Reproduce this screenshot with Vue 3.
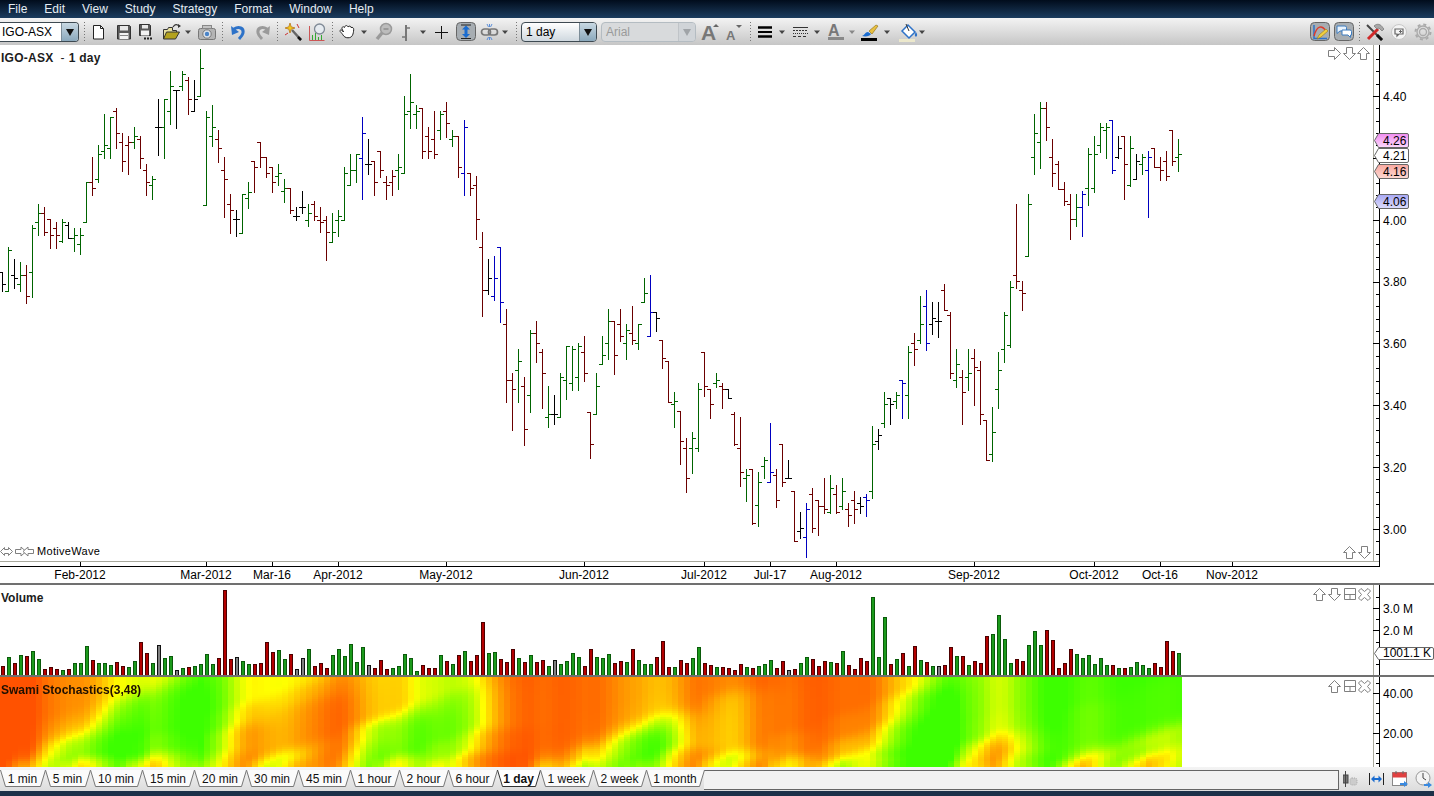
<script setup>
import { onMounted, ref } from 'vue'

const menus = ['File', 'Edit', 'View', 'Study', 'Strategy', 'Format', 'Window', 'Help']

const bars = [
[272,291,272,284,'k'],[247,291,291,250,'g'],[259,288,275,278,'k'],[262,291,284,275,'g'],[265,303,275,296,'r'],[225,297,272,228,'g'],[204,235,222,213,'g'],[207,235,213,232,'r'],
[219,248,219,235,'r'],[222,248,228,235,'r'],[219,242,241,222,'g'],[222,238,225,238,'k'],[228,251,238,235,'g'],[228,254,244,235,'g'],[182,222,222,182,'g'],[157,195,182,188,'r'],
[145,182,179,154,'g'],[114,158,151,145,'g'],[117,158,148,117,'g'],[108,148,111,133,'r'],[133,171,142,161,'r'],[136,174,145,142,'r'],[127,148,142,136,'g'],[136,168,139,158,'r'],
[164,195,170,182,'r'],[176,199,185,179,'g'],[99,155,127,127,'k'],[99,158,127,99,'g'],[71,124,111,86,'g'],[90,128,90,90,'k'],[71,90,86,74,'g'],[77,114,80,99,'r'],
[80,111,111,99,'k'],[49,96,96,68,'g'],[111,205,205,117,'g'],[105,146,136,127,'g'],[130,162,139,148,'r'],[157,217,170,179,'r'],[194,233,204,210,'r'],[210,236,219,219,'k'],
[194,233,233,194,'g'],[182,208,198,192,'g'],[161,192,161,167,'r'],[142,167,142,157,'r'],[157,177,157,173,'r'],[167,192,167,182,'r'],[164,185,176,173,'g'],[179,202,191,188,'g'],
[188,213,188,210,'r'],[207,220,216,216,'k'],[191,213,207,207,'k'],[204,226,220,213,'g'],[201,220,204,216,'r'],[207,232,220,222,'r'],[216,260,220,232,'r'],[213,242,242,232,'g'],
[210,236,220,216,'g'],[167,220,220,173,'g'],[154,185,185,170,'g'],[154,182,170,154,'g'],[117,199,158,133,'b'],[139,174,164,164,'k'],[161,195,161,182,'r'],[151,177,151,170,'r'],
[176,199,182,185,'r'],[170,195,182,176,'r'],[154,189,170,167,'g'],
[96,173,173,114,'g'],[74,128,111,102,'g'],[105,128,114,111,'g'],[108,158,108,151,'r'],[127,158,136,151,'r'],[111,158,139,154,'r'],[111,139,130,114,'g'],[102,137,111,123,'r'],
[130,146,139,136,'g'],[136,177,136,167,'r'],[120,195,173,127,'b'],[173,195,173,188,'r'],[176,239,185,219,'r'],[232,316,247,290,'r'],[259,294,290,278,'k'],[256,300,296,278,'b'],
[247,322,247,302,'b'],[309,402,324,380,'r'],[373,430,380,389,'r'],[349,402,370,361,'g'],[377,445,386,429,'r'],[330,412,395,333,'g'],[321,362,333,343,'r'],[349,408,352,373,'r'],
[386,427,417,414,'g'],[395,424,414,414,'k'],[373,417,417,377,'g'],[346,399,380,346,'g'],[346,390,383,349,'g'],[343,390,377,346,'g'],[336,381,352,373,'r'],[412,458,412,444,'r'],
[373,414,414,386,'g'],[336,364,364,355,'g'],[309,359,343,321,'g'],[321,374,321,355,'r'],[309,341,324,336,'r'],[324,359,343,330,'g'],[306,344,333,340,'r'],[324,349,343,324,'g'],
[278,302,302,293,'g'],[275,336,336,312,'b'],[312,331,312,318,'k'],[340,368,340,358,'r'],[361,402,361,402,'r'],[392,427,404,401,'g'],[411,464,411,441,'r'],[438,492,448,478,'r'],
[432,473,448,438,'g'],[383,451,448,389,'g'],[352,396,352,386,'r'],[389,418,389,404,'r'],[373,387,383,380,'g'],[383,408,386,389,'r'],[389,398,389,398,'k'],[412,445,414,444,'r'],
[417,486,448,472,'r'],[469,501,478,475,'g'],[469,524,469,523,'r'],[472,526,505,482,'g'],[457,478,466,460,'g'],[423,482,482,472,'b'],[469,507,475,500,'r'],[444,486,444,482,'r'],
[460,478,478,478,'k'],
[491,541,491,541,'r'],[512,538,531,528,'k'],[503,557,537,509,'b'],[488,532,494,528,'r'],[500,535,500,506,'r'],[478,513,506,509,'r'],[475,513,512,488,'g'],[485,513,494,512,'r'],
[478,509,506,491,'g'],[503,526,509,515,'r'],[491,523,500,509,'r'],[497,513,503,506,'k'],[494,516,497,500,'b'],[426,498,491,444,'g'],[429,449,441,435,'k'],[392,427,423,404,'g'],
[398,424,398,404,'k'],[392,408,401,395,'g'],[380,418,380,383,'b'],[346,418,395,352,'g'],[333,365,343,349,'r'],[296,343,340,324,'g'],[290,350,306,343,'b'],[302,334,324,318,'k'],
[302,337,321,321,'k'],[284,310,290,310,'r'],[312,378,315,373,'r'],[349,387,380,364,'g'],[370,424,377,392,'r'],[349,390,377,373,'g'],[349,405,358,367,'r'],[361,424,370,414,'r'],
[420,460,420,460,'r'],[407,461,454,432,'g'],[352,408,389,370,'g'],[312,362,349,315,'g'],[281,347,345,287,'g'],[204,288,275,281,'r'],[281,310,290,293,'r'],[194,256,256,204,'g'],
[114,174,157,133,'g'],[102,168,142,108,'g'],[102,140,108,127,'r'],[139,186,157,173,'r'],[161,189,164,189,'r'],[182,205,189,201,'r'],[194,239,204,219,'r'],[194,226,219,207,'g'],
[191,236,207,194,'b'],[148,205,188,154,'g'],[136,192,188,154,'g'],[123,152,145,127,'g'],[123,158,130,127,'g'],[120,173,120,170,'b'],[136,158,157,148,'k'],[136,199,136,164,'r'],
[136,186,185,148,'g'],[154,179,179,161,'k'],[154,174,164,157,'g'],[151,217,170,157,'b'],[148,167,148,167,'r'],[157,180,167,170,'r'],[151,180,161,176,'r'],[130,165,130,161,'r'],
[139,171,157,154,'g']
]

const vols = [9,18,12,20,19,24,16,6,8,6,5,6,12,12,29,15,12,12,10,13,9,8,14,33,22,12,30,17,19,5,7,8,9,11,21,11,17,85,
16,18,14,11,11,12,33,23,25,16,21,6,17,26,9,12,7,20,26,19,31,13,28,10,7,15,6,7,9,21,17,4,10,7,7,20,14,11,20,24,14,20,53,22,23,16,13,26,17,13,20,13,15,9,15,11,14,22,18,9,26,18,17,21,12,14,13,26,15,11,11,18,34,8,8,15,12,17,28,12,10,8,8,7,5,11,8,7,9,11,15,7,14,5,6,12,18,16,9,14,13,12,24,10,6,17,14,78,18,58,11,16,22,9,29,15,13,9,9,10,28,19,19,10,14,12,39,41,60,36,12,16,14,30,44,30,45,35,7,12,26,21,17,20,11,17,10,10,7,7,8,13,10,7,12,8,34,24,22]

const colors = { g: '#006400', r: '#6b0000', b: '#0000c0', k: '#000000' }

const seriesPaths = Object.keys(colors).map((key) => {
  let d = ''
  bars.forEach((b, i) => {
    if (b[4] !== key) return
    const x = 2 + 6 * i
    d += `M${x + 0.5} ${b[0]}V${b[1] + 1}M${x - 3} ${b[2] + 0.5}H${x + 0.5}M${x + 0.5} ${b[3] + 0.5}H${x + 4}`
  })
  return { key, d, color: colors[key] }
})

const volBars = vols.map((h, i) => {
  const b = bars[i]
  const kind = b[3] < b[2] ? 'up' : b[3] > b[2] ? 'down' : 'flat'
  return { x: 6 * i + 1.5, y: 675.5 - h, h, kind }
})

const priceTicks = []
for (let k = -3; k < 38; k++) priceTicks.push({ y: Math.round(96 + k * 12.37), major: ((k % 5) + 5) % 5 === 0 })
const priceLabels = [['4.40', 96], ['4.00', 220], ['3.80', 281], ['3.60', 343], ['3.40', 405], ['3.20', 467], ['3.00', 529]]
const dateLabels = [['Feb-2012', 80], ['Mar-2012', 206], ['Mar-16', 272], ['Apr-2012', 338], ['May-2012', 446], ['Jun-2012', 584], ['Jul-2012', 704], ['Jul-17', 770], ['Aug-2012', 836], ['Sep-2012', 974], ['Oct-2012', 1094], ['Oct-16', 1160], ['Nov-2012', 1232]]
const priceTags = [['4.26', 140, 'url(#tagPink)'], ['4.21', 155, '#ffffff'], ['4.16', 171, 'url(#tagRed)'], ['4.06', 201, 'url(#tagBlue)']]
const tagPath = (y, h, r) => `M1374.5 ${y + 0.5}L1378.5 ${y - h + 0.5}H${r - 1.5}Q${r} ${y - h + 0.5} ${r} ${y - h + 2}V${y + h - 1}Q${r} ${y + h + 0.5} ${r - 1.5} ${y + h + 0.5}H1378.5Z`

const ctlPaths = {
  up: 'M6.5 .5L12.5 6.5H9.5V12.5H3.5V6.5H.5Z',
  down: 'M3.5 .5H9.5V6.5H12.5L6.5 12.5L.5 6.5H3.5Z',
  right: 'M.5 3.5H6.5V.5L12.5 6.5L6.5 12.5V9.5H.5Z',
  left: 'M12.5 3.5H6.5V.5L.5 6.5L6.5 12.5V9.5H12.5Z',
  win: 'M.5 .5H11.5V11.5H.5ZM.5 6.5H11.5M6 6.5V11.5',
  x: 'M3 .5L6.5 3.5L10 .5L12.5 3L9.5 6.5L12.5 10L10 12.5L6.5 9.5L3 12.5L.5 10L3.5 6.5L.5 3Z',
  both: 'M.5 6.5L4.5 2.5V4.5H8.5V2.5L12.5 6.5L8.5 10.5V8.5H4.5V10.5Z',
  fwd: 'M.5 4.5H6V2L11 6.5L6 11V8.5H.5Z',
  back: 'M12.5 4.5H7V2L2 6.5L7 11V8.5H12.5Z'
}
const priceCtl = [['right', 1328, 47], ['down', 1343, 47], ['up', 1357, 47], ['up', 1343, 546], ['down', 1358, 546], ['both', 0, 545], ['fwd', 15, 545], ['back', 21, 545]]
const volCtl = [['up', 1313, 588], ['down', 1328, 588], ['win', 1344, 588], ['x', 1358, 588]]
const heatCtl = [['up', 1328, 680], ['win', 1344, 680], ['x', 1358, 680]]

const volTicks = [597, 608, 619, 630, 642, 653, 664, 675]
const heatTicks = [683, 693, 703, 713, 723, 733, 743, 753, 763]

const svg = (inner, w = 22) => `<svg xmlns="http://www.w3.org/2000/svg" width="${w}" height="22" viewBox="0 0 ${w} 22">${inner}</svg>`
const caret = (c = '#444') => svg(`<path d="M1 9.5h6l-3 3.5z" fill="${c}"/>`, 8)
const sep = svg('<path d="M1.5 1v20" stroke="#777" stroke-dasharray="1 2"/>', 3)
const txt = (x, y, size, fill, t) => `<text x="${x}" y="${y}" font-family="Liberation Sans" font-weight="bold" font-size="${size}" fill="${fill}">${t}</text>`

const I = {
  doc: svg('<path d="M5.5 4.5h7l3 3v10.500h-10z" fill="#fff" stroke="#222"/><path d="M12.500 4.500v3h3" fill="none" stroke="#222"/>'),
  save: svg('<path d="M4.500 4.500h12l1 1v12.500h-13z" fill="#5a5a5a" stroke="#333"/><rect x="7" y="5" width="8" height="4.500" fill="#e8e8e8"/><rect x="6.500" y="12" width="9" height="6" fill="#f4f4f4"/><rect x="7" y="14" width="8" height="1" fill="#888"/>'),
  saveas: svg('<path d="M4.500 3.500h10l1 1v10h-11z" fill="#5a5a5a" stroke="#333"/><rect x="7" y="4" width="6" height="3.500" fill="#e8e8e8"/><rect x="6" y="9.500" width="8" height="5" fill="#f4f4f4"/><path d="M9 17.500h2M12 17.500h2M15 17.500h2" stroke="#222" stroke-width="2"/>'),
  open: svg('<path d="M3.500 18V8.500h4l1-2h4v3h4v3" fill="#e6e0a0" stroke="#333"/><path d="M3.500 18l3-7h13l-4 7z" fill="#b3a21e" stroke="#333"/><path d="M13 6c2-3 4-3 6-1" fill="none" stroke="#333" stroke-width="1.200"/><path d="M18 3l3 2-3 2z" fill="#333"/>'),
  camera: svg('<rect x="2.500" y="7.500" width="17" height="11" rx="2" fill="#b4b4b4" stroke="#777"/><rect x="6.500" y="4.500" width="9" height="3" fill="#c4c4c4" stroke="#888"/><circle cx="11" cy="13" r="4.200" fill="#e0e4ea" stroke="#777"/><circle cx="11" cy="13" r="2.200" fill="#4a84c8"/>'),
  undo: svg('<path d="M7 8c5-3 10-1 9 4-.4 2-2 4-4 6" fill="none" stroke="#2d72c8" stroke-width="3"/><path d="M4 5l1 9 7-3z" fill="#2d72c8"/>'),
  redo: svg('<path d="M15 8c-5-3-10-1-9 4 .4 2 2 4 4 6" fill="none" stroke="#9a9a9a" stroke-width="3"/><path d="M18 5l-1 9-7-3z" fill="#9a9a9a"/>'),
  wand: svg('<path d="M19 19L10 9" stroke="#666" stroke-width="2.500"/><path d="M19 19l-3-3" stroke="#111" stroke-width="2.500"/><path d="M8 2l1.200 3.800L13 7 9.200 8.200 8 12 6.800 8.200 3 7l3.800-1.200z" fill="#f2c81e" stroke="#b06a10" stroke-width=".7"/><path d="M15 3l2 4M3 14l3-2" stroke="#c33"/>'),
  mag: svg('<path d="M3.500 5v14.500h15" fill="none" stroke="#c55"/><path d="M6.500 19v-5M9.500 19v-7M12.500 19v-3M15.500 19v-5" stroke="#3a3"/><circle cx="13.500" cy="8" r="5" fill="#e6ecf2" fill-opacity=".85" stroke="#7f8a96" stroke-width="1.300"/>'),
  hand: svg('<path d="M5 8c-.5-2 1.500-3 2.500-1.500C8 4 10.500 4 11 6c1-1.500 3-1 3 .5 1.500-.5 3 .5 2.700 2.300-.4 4-1 8-5.700 8-2.500 0-4-1-5.500-3.500C4 11 2 10 3.300 9.200 4 8.800 5 9 6.500 11z" fill="#fff" stroke="#222"/>'),
  zoom: svg('<circle cx="13" cy="8" r="5.500" fill="#bcbcbc" stroke="#9a9a9a" stroke-width="1.500"/><path d="M9 12l-5 6" stroke="#9a9a9a" stroke-width="3.500"/><path d="M10.500 8h5" stroke="#777"/>'),
  marker: svg('<path d="M11 4v16" stroke="#777" stroke-width="2"/><path d="M7 16h4M11 7h4" stroke="#777" stroke-width="1.500"/>'),
  plus: svg('<path d="M11.500 5v13M5 11.500h13" stroke="#111"/>'),
  toggle: svg('<rect x="1.500" y="1.500" width="19" height="18" rx="4" fill="#a7adb2" stroke="#666"/><path d="M11 4.500l4 4h-2.500v4.500h2.500l-4 4-4-4h2.500V8.500H7z" fill="#1a6cd0"/><path d="M6 4h10M6 17.500h10" stroke="#222"/>'),
  link: svg('<rect x="2.500" y="8" width="9" height="6" rx="3" fill="none" stroke="#777" stroke-width="1.700"/><rect x="9.500" y="8" width="9" height="6" rx="3" fill="none" stroke="#777" stroke-width="1.700"/><path d="M8 3l1.500 3M13 3l-1.500 3M8 19l1.500-3M13 19l-1.500-3M10.500 3v3M10.500 16v3" stroke="#5b8ed8"/>'),
  fontUp: svg(txt(1, 19, 21, '#777', 'A') + '<path d="M13 6l3-3 3 3z" fill="#666"/>'),
  fontDown: svg(txt(4, 19, 13, '#777', 'A') + '<path d="M14 4h6l-3 3z" fill="#666"/>'),
  weight: svg('<path d="M3 6.500h14" stroke="#000" stroke-width="2.500"/><path d="M3 11h14" stroke="#000" stroke-width="2"/><path d="M3 15.500h14" stroke="#000" stroke-width="2.500"/>'),
  dash: svg('<path d="M3 6.500h15" stroke="#333"/><path d="M3 9.500h15" stroke="#333" stroke-dasharray="2 1"/><path d="M3 12.500h15" stroke="#333" stroke-dasharray="1 1"/><path d="M3 15.500h15" stroke="#333" stroke-dasharray="3 2"/>'),
  fontColor: svg(txt(3, 15, 16, '#777', 'A') + '<rect x="3" y="16" width="16" height="3" fill="#888"/>'),
  pen: svg('<path d="M3 15c3-1 3-4 6-4l3 2c-1 2-5 3-9 2z" fill="#1a6cd0"/><path d="M10 10l7-6 2 1-6 8z" fill="#e8c040" stroke="#8a6a10" stroke-width=".6"/><rect x="2" y="17" width="16" height="3" fill="#000"/>'),
  fill: svg('<path d="M5 10l6-6 7 7-6 6z" fill="#fff" stroke="#2d72c8" stroke-width="1.500"/><path d="M9 3l3 7" stroke="#333"/><path d="M19 11c1 2 2 3 0 5-2-2-1-3 0-5z" fill="#2d72c8"/><rect x="2" y="18" width="16" height="3" fill="#ece8cc"/>'),
  study: svg('<rect x="1.500" y="1.500" width="19" height="18" rx="4" fill="#a7adb2" stroke="#666"/><path d="M5 4v13.500h13" fill="none" stroke="#2d72c8" stroke-width="1.500"/><path d="M5 15C8 4 13 4 17 10" fill="none" stroke="#e0392a" stroke-width="1.500"/><path d="M8 18l2-4 7-6 2 2-7 6z" fill="#f0d040" stroke="#a07a10" stroke-width=".6"/>'),
  talk: svg('<rect x="1.500" y="1.500" width="19" height="18" rx="4" fill="#a7adb2" stroke="#666"/><path d="M4 5h8a1.500 1.500 0 0 1 1.500 1.500V10H7l-3 2.500V5z" fill="#e8f2fc" stroke="#3d7cc0"/><path d="M9 9h8a1.500 1.500 0 0 1 1.500 1.500V14h-1v2.500L15 14H9z" fill="#fff" stroke="#3d7cc0"/>'),
  tools: svg('<path d="M3 4l15 15" stroke="#444" stroke-width="2"/><path d="M13 14l5 5" stroke="#111" stroke-width="3"/><path d="M4 18L14 8" stroke="#d02828" stroke-width="3"/><path d="M10 5c3-3 7-2 9 2l1 1-2 2-3-3-2 1z" fill="#a8a8a8" stroke="#666" stroke-width=".6"/>'),
  circle: svg('<circle cx="11" cy="11" r="7.500" fill="#f4f4f4" stroke="#c8c8c8"/><path d="M7 8h8v5H11l-2 2v-2H7z" fill="none" stroke="#666" stroke-width="1.200"/><path d="M12.500 9v3M11 10.500h3" stroke="#666"/>'),
  gear: svg('<circle cx="11" cy="11" r="3.500" fill="none" stroke="#aaa" stroke-width="1.300"/><circle cx="11" cy="11" r="6" fill="none" stroke="#aaa" stroke-width="1.300"/><circle cx="11" cy="11" r="7.500" fill="none" stroke="#aaa" stroke-width="2" stroke-dasharray="3 2.900"/>')
}

const items = [
  { kind: 'combo', x: 0, w: 79, text: 'IGO-ASX', cls: 'sym' },
  { c: 84, w: 3, html: sep }, { c: 99, w: 22, html: I.doc }, { c: 124, w: 22, html: I.save }, { c: 146, w: 22, html: I.saveas }, { c: 171, w: 22, html: I.open }, { c: 188, w: 8, html: caret() }, { c: 207, w: 22, html: I.camera },
  { c: 222, w: 3, html: sep }, { c: 238, w: 22, html: I.undo }, { c: 263, w: 22, html: I.redo }, { c: 277, w: 3, html: sep }, { c: 293, w: 22, html: I.wand }, { c: 317, w: 22, html: I.mag }, { c: 332, w: 3, html: sep },
  { c: 348, w: 22, html: I.hand }, { c: 364, w: 8, html: caret() }, { c: 384, w: 22, html: I.zoom }, { c: 406, w: 22, html: I.marker }, { c: 423, w: 8, html: caret() }, { c: 441, w: 22, html: I.plus }, { c: 466, w: 22, html: I.toggle },
  { c: 490, w: 22, html: I.link }, { c: 505, w: 8, html: caret() }, { c: 516, w: 3, html: sep },
  { kind: 'combo', x: 521, w: 76, text: '1 day', cls: 'per' },
  { kind: 'combo', x: 601, w: 95, text: 'Arial', cls: 'off' },
  { c: 711, w: 22, html: I.fontUp }, { c: 733, w: 22, html: I.fontDown }, { c: 750, w: 3, html: sep }, { c: 766, w: 22, html: I.weight }, { c: 782, w: 8, html: caret() }, { c: 801, w: 22, html: I.dash }, { c: 817, w: 8, html: caret() },
  { c: 836, w: 22, html: I.fontColor }, { c: 852, w: 8, html: caret('#888') }, { c: 870, w: 22, html: I.pen }, { c: 887, w: 8, html: caret() }, { c: 908, w: 22, html: I.fill }, { c: 922, w: 8, html: caret() },
  { c: 1320, w: 22, html: I.study }, { c: 1344, w: 22, html: I.talk }, { c: 1359, w: 3, html: sep }, { c: 1375, w: 22, html: I.tools }, { c: 1399, w: 22, html: I.circle }, { c: 1423, w: 22, html: I.gear }
]
let end = 0
items.forEach((it) => {
  const left = it.kind === 'combo' ? it.x : it.c - it.w / 2
  it.ml = left - end
  end = left + it.w
})

const tabDefs = [['1 min', 45], ['5 min', 45], ['10 min', 52], ['15 min', 52], ['20 min', 52], ['30 min', 52], ['45 min', 52], ['1 hour', 49], ['2 hour', 49], ['6 hour', 49], ['1 day', 43, true], ['1 week', 53], ['2 week', 53], ['1 month', 58]]
const tabs = tabDefs.map(([label, w, on]) => ({ label, w, on: !!on, edge: `0.5,0 5.5,16.5 ${w - 4.5},16.5 ${w + 0.5},0` }))

const heat = ref(null)
onMounted(() => {
  const hist = 70
  const closes = []
  for (let k = hist; k >= 1; k--) closes.push(285 - 225 * Math.min(1, k / 22) + Math.sin(k / 2.3) * 6)
  bars.forEach((b) => closes.push((b[0] + b[1]) / 2))
  const rows = 45
  const alpha = 0.34
  const field = []
  for (let row = 0; row < rows; row++) {
    const N = 48 - row
    let s1 = 0.5
    let s2 = 0.5
    const line = new Array(bars.length).fill(0.5)
    for (let t = N; t < closes.length; t++) {
      let lo = -Infinity
      let hi = Infinity
      for (let j = t - N + 1; j <= t; j++) {
        lo = Math.max(lo, closes[j])
        hi = Math.min(hi, closes[j])
      }
      const raw = lo === hi ? 0.5 : (lo - closes[t]) / (lo - hi)
      s1 = alpha * raw + (1 - alpha) * s1
      s2 = alpha * s1 + (1 - alpha) * s2
      if (t >= hist) line[t - hist] = s2
    }
    field.push(line)
  }
  const ctx = heat.value.getContext('2d')
  for (let row = 0; row < rows; row++) {
    for (let i = 0; i < bars.length; i++) {
      let sum = 0
      let n = 0
      for (let dr = -2; dr <= 2; dr++) {
        const line = field[row + dr]
        if (line) {
          sum += line[i]
          n++
        }
      }
      const m = sum / n
      const raised = m < 0.5 ? 0.5 - (0.5 - m) * 0.72 : 0.5 + (m - 0.5) * 0.95
      const v = Math.min(0.88, Math.max(0.16, raised))
      const r = v >= 0.5 ? Math.round(510 * (1 - v)) : 255
      const g = v >= 0.5 ? 255 : Math.round(510 * v)
      ctx.fillStyle = `rgb(${r},${g},0)`
      ctx.fillRect(i * 6, row * 2, 6, 2)
    }
  }
})
</script>

<template>
  <div class="app">
    <nav class="menubar">
      <span v-for="m in menus" :key="m" class="menu">{{ m }}</span>
    </nav>

    <div class="toolbar">
      <template v-for="(it, n) in items" :key="n">
        <div v-if="it.kind === 'combo'" class="combo" :class="it.cls" :style="{ marginLeft: it.ml + 'px', width: it.w + 'px' }">
          <span class="combo-text">{{ it.text }}</span>
          <span class="combo-btn"><i class="tri"></i></span>
        </div>
        <span v-else class="tool" :style="{ marginLeft: it.ml + 'px', width: it.w + 'px' }" v-html="it.html"></span>
      </template>
    </div>

    <section class="pane price">
      <svg class="plot" width="1434" height="538" viewBox="0 45 1434 538">
        <defs>
          <linearGradient id="tagPink" x1="0" y1="0" x2="0" y2="1"><stop offset="0" stop-color="#f08cf0" /><stop offset="1" stop-color="#fcd8fc" /></linearGradient>
          <linearGradient id="tagRed" x1="0" y1="0" x2="0" y2="1"><stop offset="0" stop-color="#f8a8a0" /><stop offset="1" stop-color="#fcd8d2" /></linearGradient>
          <linearGradient id="tagBlue" x1="0" y1="0" x2="0" y2="1"><stop offset="0" stop-color="#a8a8f4" /><stop offset="1" stop-color="#dcdcfc" /></linearGradient>
        </defs>
        <g class="crisp">
          <path v-for="s in seriesPaths" :key="s.key" :d="s.d" :stroke="s.color" fill="none" />
          <path d="M1373.500 45V562M0 561.500H1379.500" stroke="#a8a89c" fill="none" />
          <path d="M1379.500 45V566.500M0 566.500H1380" stroke="#000" fill="none" />
          <path v-for="t in priceTicks" :key="t.y" :d="`M${t.major ? 1373 : 1376} ${t.y + 0.5}H1379`" stroke="#000" />
          <path v-for="d in dateLabels" :key="d[0]" :d="`M${d[1] + 0.5} 562V566`" stroke="#000" />
        </g>
        <text v-for="l in priceLabels" :key="l[0]" class="axis" x="1383" :y="l[1] + 5">{{ l[0] }}</text>
        <text v-for="d in dateLabels" :key="d[0]" class="axis" :x="d[1]" y="579" text-anchor="middle">{{ d[0] }}</text>
        <g v-for="t in priceTags" :key="t[0]">
          <path :d="tagPath(t[1], 7, 1408.5)" :fill="t[2]" stroke="#666" />
          <text class="axis" x="1383" :y="t[1] + 5">{{ t[0] }}</text>
        </g>
        <g v-for="(c, n) in priceCtl" :key="n" :transform="`translate(${c[1]} ${c[2]})`">
          <path :d="ctlPaths[c[0]]" class="ctl" />
        </g>
      </svg>
      <div class="title top">IGO-ASX<span class="dash">-</span>1 day</div>
      <div class="brand">MotiveWave</div>
    </section>

    <div class="sep"></div>

    <section class="pane volume">
      <svg class="plot" width="1434" height="90" viewBox="0 585 1434 90">
        <g class="crisp">
          <rect v-for="(v, i) in volBars" :key="i" :x="v.x" :y="v.y" width="3" :height="v.h" :class="v.kind" />
          <path d="M1373.500 585V675" stroke="#a8a89c" />
          <path d="M1379.500 585V675" stroke="#000" />
          <path v-for="y in volTicks" :key="y" :d="`M${y === 608 || y === 630 ? 1373 : 1376} ${y + 0.5}H1379`" stroke="#000" />
        </g>
        <text class="axis" x="1383" y="613">3.0 M</text>
        <text class="axis" x="1383" y="635">2.0 M</text>
        <path :d="tagPath(653, 6, 1433.5)" fill="#fff" stroke="#666" />
        <text class="axis" x="1383" y="657">1001.1 K</text>
        <g v-for="(c, n) in volCtl" :key="n" :transform="`translate(${c[1]} ${c[2]})`">
          <path :d="ctlPaths[c[0]]" class="ctl" />
        </g>
      </svg>
      <div class="title vol">Volume</div>
    </section>

    <div class="sep"></div>

    <section class="pane heat">
      <canvas ref="heat" class="heatmap" width="1182" height="90"></canvas>
      <svg width="252" height="90" viewBox="1182 677 252 90">
        <g class="crisp">
          <path d="M1373.500 677V767" stroke="#a8a89c" />
          <path d="M1379.500 677V767" stroke="#000" />
          <path v-for="y in heatTicks" :key="y" :d="`M${y === 693 || y === 733 ? 1373 : 1376} ${y + 0.5}H1379`" stroke="#000" />
        </g>
        <text class="axis" x="1383" y="698">40.00</text>
        <text class="axis" x="1383" y="738">20.00</text>
        <g v-for="(c, n) in heatCtl" :key="n" :transform="`translate(${c[1]} ${c[2]})`">
          <path :d="ctlPaths[c[0]]" class="ctl" />
        </g>
      </svg>
      <div class="title swami">Swami Stochastics(3,48)</div>
    </section>

    <footer class="tabbar">
      <div class="tabs">
        <div v-for="t in tabs" :key="t.label" class="tab" :class="{ on: t.on }" :style="{ width: t.w + 'px' }">
          <svg class="tab-edge" :width="t.w + 1" height="18"><polygon :points="t.edge" :fill="t.on ? '#fff' : '#fbfbfb'" stroke="none" /><polyline :points="t.edge" fill="none" :stroke="t.on ? '#333' : '#777'" /></svg>
          <span class="tab-label">{{ t.label }}</span>
        </div>
        <div class="tab-rest"></div>
      </div>
      <div class="status">
        <svg width="18" height="18" viewBox="0 0 18 18"><rect x="0" y="5" width="5" height="8" fill="#777" stroke="#444" /><path d="M2.500 1v16" stroke="#444" /><rect x="7" y="8" width="7" height="7" rx="2" fill="#ccc" stroke="#aaa" stroke-dasharray="1 1" /></svg>
        <svg width="18" height="18" viewBox="0 0 18 18"><path d="M2.500 3v12M16.500 3v12" stroke="#222" /><path d="M4 9l3.500-3.500V8h4V5.500L15 9l-3.500 3.500V10h-4v2.500z" fill="#1a6cd0" /></svg>
        <svg width="18" height="18" viewBox="0 0 18 18"><rect x="1.500" y="2.500" width="14" height="13" fill="#fff" stroke="#888" /><rect x="1.500" y="2.500" width="14" height="5" fill="#e04040" /><path d="M5 1v3M12 1v3" stroke="#666" /><path d="M9 13h4v-2l4 3-4 3v-2H9z" fill="#3a8ae0" /></svg>
        <svg width="18" height="18" viewBox="0 0 18 18"><circle cx="8" cy="8" r="7" fill="#f4f4f4" stroke="#9a9a9a" /><path d="M8 3v5l3 2" fill="none" stroke="#444" /><path d="M9 14h4v-2l4 3-4 3v-2H9z" fill="#3a8ae0" /></svg>
      </div>
    </footer>
    <div class="bottom"></div>
  </div>
</template>

<style scoped>
.app {
  width: 1434px;
  height: 796px;
  display: flex;
  flex-direction: column;
  overflow: hidden;
  background: #fff;
  font-family: "Liberation Sans", Arial, sans-serif;
  font-size: 12px;
  color: #000;
}
.menubar {
  height: 18px;
  flex: none;
  display: flex;
  align-items: center;
  padding-left: 8px;
  gap: 17px;
  background: linear-gradient(#010c1c, #1b3c5e);
  color: #e6edf3;
}
.toolbar {
  height: 27px;
  flex: none;
  display: flex;
  align-items: center;
  background: linear-gradient(#f3f3f3, #c6c6c6);
}
.tool {
  flex: none;
  height: 22px;
  margin-top: 1px;
  display: block;
  line-height: 0;
}
.combo {
  flex: none;
  box-sizing: border-box;
  height: 20px;
  margin-top: 1px;
  display: flex;
  border: 1px solid #3e4a52;
  border-left: 1px solid #3e4a52;
  border-radius: 4px;
  overflow: hidden;
  background: linear-gradient(#fff, #cfd8df);
}
.combo-text {
  flex: 1;
  padding-left: 4px;
  line-height: 19px;
  font-size: 12px;
}
.combo-btn {
  width: 16px;
  flex: none;
  display: flex;
  align-items: center;
  justify-content: center;
  border-left: 1px solid #7b8c98;
  background: linear-gradient(#c8d8e2, #8aa8bc);
}
.tri {
  width: 0;
  height: 0;
  border: 4px solid transparent;
  border-top: 7px solid #111;
  border-bottom: 0;
}
.sym {
  background: #fff;
  border-left: 0;
  border-radius: 0 4px 4px 0;
}
.sym .combo-text {
  padding-left: 2px;
}
.off {
  border-color: #b4bcc2;
  background: #d8dadc;
  color: #9a9a9a;
}
.off .combo-btn {
  background: #d0d4d8;
  border-left-color: #c0c4c8;
}
.off .tri {
  border-top-color: #a0a4a8;
}
.pane {
  position: relative;
  flex: none;
  overflow: hidden;
}
.price {
  height: 538px;
}
.volume,
.heat {
  height: 90px;
}
.heat {
  display: flex;
}
.heatmap {
  display: block;
  flex: none;
}
.plot {
  display: block;
}
.crisp {
  shape-rendering: crispEdges;
}
.sep {
  height: 2px;
  flex: none;
  background: #707070;
}
.axis {
  font-family: "Liberation Sans", Arial, sans-serif;
  font-size: 12px;
  fill: #000;
}
.ctl {
  fill: #fff;
  stroke: #808080;
  stroke-width: 1;
}
.up {
  fill: #1c9a1c;
  stroke: #0a5a0a;
}
.down {
  fill: #b30000;
  stroke: #4c0000;
}
.flat {
  fill: #808080;
  stroke: #111;
}
.title {
  position: absolute;
  left: 1px;
  font-weight: bold;
  color: #1c1c1c;
  line-height: 14px;
}
.top {
  top: 6px;
  letter-spacing: 0.25px;
}
.dash {
  margin: 0 4px 0 7px;
  font-weight: normal;
}
.vol {
  top: 6px;
}
.swami {
  top: 6px;
  color: #201000;
}
.brand {
  position: absolute;
  left: 37px;
  top: 499px;
  font-size: 11px;
  letter-spacing: 0.3px;
  line-height: 14px;
}
.tabbar {
  height: 24px;
  flex: none;
  display: flex;
  box-sizing: border-box;
  padding-top: 3px;
  background: linear-gradient(#f4f4f4, #dcdcdc);
}
.tabs {
  width: 1339px;
  flex: none;
  height: 20px;
  display: flex;
}
.tab {
  position: relative;
  flex: none;
  height: 18px;
  display: flex;
  align-items: center;
  justify-content: center;
}
.tab-edge {
  position: absolute;
  left: 0;
  top: 0;
  overflow: visible;
}
.tab-label {
  position: relative;
  color: #111;
}
.on .tab-label {
  font-weight: bold;
}
.tab-rest {
  flex: 1;
  box-sizing: border-box;
  border: 1px solid #666;
  border-left: 0;
  background: #f2f2f2;
}
.status {
  display: flex;
  align-items: flex-start;
  margin-left: 2px;
  gap: 6px;
  padding-left: 2px;
}
.bottom {
  flex: 1;
  background: #1c3048;
}
</style>

<style>
html,
body {
  margin: 0;
  background: #fff;
}
</style>
